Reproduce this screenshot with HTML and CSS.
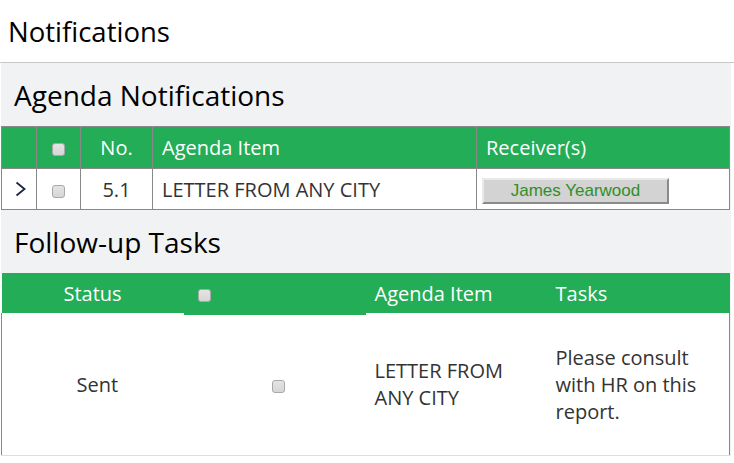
FILE: index.html
```html
<!DOCTYPE html>
<html lang="en">
  <head>
    <meta charset="UTF-8" />
    <meta name="viewport" content="width=device-width, initial-scale=1.0" />
    <title>Notifications</title>
    <link rel="stylesheet" href="styles.css">
  </head>
  <body>
    <h1 class="page-title">Notifications</h1>

    <div class="panel">
      <h2 class="section-title">Agenda Notifications</h2>

      <table class="grid agenda">
        <colgroup>
          <col style="width: 35px" />
          <col style="width: 44px" />
          <col style="width: 72px" />
          <col style="width: 324px" />
          <col />
        </colgroup>
        <thead>
          <tr>
            <th></th>
            <th class="center"><input type="checkbox" class="check" /></th>
            <th class="center">No.</th>
            <th>Agenda Item</th>
            <th>Receiver(s)</th>
          </tr>
        </thead>
        <tbody>
          <tr>
            <td class="center">
              <svg class="chevron" width="12" height="16" viewBox="0 0 12 16">
                <polyline points="1.5,1.5 9.5,8 1.5,14.5" fill="none" stroke="#1b2540" stroke-width="1.8" />
              </svg>
            </td>
            <td class="center"><input type="checkbox" class="check" /></td>
            <td class="center">5.1</td>
            <td>LETTER FROM ANY CITY</td>
            <td class="receiver-cell"><button class="receiver">James Yearwood</button></td>
          </tr>
        </tbody>
      </table>

      <h2 class="section-title">Follow-up Tasks</h2>

      <table class="grid tasks">
        <colgroup>
          <col style="width: 182px" />
          <col style="width: 182px" />
          <col style="width: 181px" />
          <col />
        </colgroup>
        <thead>
          <tr>
            <th class="center">Status</th>
            <th class="check-head"><input type="checkbox" class="check" /></th>
            <th>Agenda Item</th>
            <th>Tasks</th>
          </tr>
        </thead>
        <tbody>
          <tr>
            <td class="center status">Sent</td>
            <td class="center select"><input type="checkbox" class="check" /></td>
            <td>LETTER FROM ANY CITY</td>
            <td>Please consult with HR on this report.</td>
          </tr>
        </tbody>
      </table>
    </div>
  </body>
</html>
```

FILE: styles.css
```css
body {
  font-family: "Open Sans", Arial, sans-serif;
  margin: 0;
  color: #333;
  background: #fff;
}
.page-title {
  margin: 0;
  height: 62px;
  line-height: 64px;
  padding-left: 8px;
  font-size: 27.5px;
  font-weight: normal;
  color: #000;
  border-bottom: 1px solid #c8c8c8;
}
.panel {
  margin-left: 1px;
  width: 730px;
  background: #f1f2f4;
}
.section-title {
  margin: 0;
  height: 63px;
  line-height: 64px;
  padding-left: 13px;
  font-size: 28px;
  font-weight: normal;
  color: #000;
}
.grid {
  width: 729px;
  border-collapse: collapse;
  table-layout: fixed;
  background: #fff;
  font-size: 20px;
}
.grid th {
  background: #22ad56;
  color: #fff;
  font-weight: normal;
  text-align: left;
  padding: 0 9px;
}
.grid td {
  padding: 0 9px;
}
.center {
  text-align: center !important;
}
.agenda th,
.agenda td {
  border: 1px solid #888;
}
.agenda th {
  height: 41px;
}
.agenda td {
  height: 40px;
}
.agenda td.receiver-cell {
  padding-left: 5px;
}
.tasks th {
  height: 40px;
}
.tasks th.check-head {
  padding-left: 14px;
  box-shadow: 0 2px 0 #22ad56;
}
.tasks tbody td {
  height: 142px;
  line-height: 27px;
  border-bottom: 1px solid #ddd;
}
.tasks tbody td:first-child {
  border-left: 1px solid #888;
}
.tasks tbody td:last-child {
  border-right: 1px solid #888;
  padding-right: 14px;
}
.tasks td.status {
  padding-left: 18px;
}
.tasks td.select {
  padding-left: 17px;
}
.check {
  appearance: none;
  width: 13px;
  height: 13px;
  margin: 0;
  vertical-align: middle;
  border: 1px solid #a9a9a9;
  border-radius: 3px;
  background: linear-gradient(#e4e4e4, #d6d6d6);
}
.chevron {
  display: block;
  margin-left: 4px;
}
.receiver {
  width: 187px;
  height: 26px;
  padding: 0;
  font-family: "Liberation Sans", Arial, sans-serif;
  font-size: 17px;
  color: #2f8f2a;
  background: #d3d3d3;
  border: 2px solid;
  border-color: #e9e9e9 #8a8a8a #8a8a8a #e9e9e9;
  cursor: pointer;
}
```
